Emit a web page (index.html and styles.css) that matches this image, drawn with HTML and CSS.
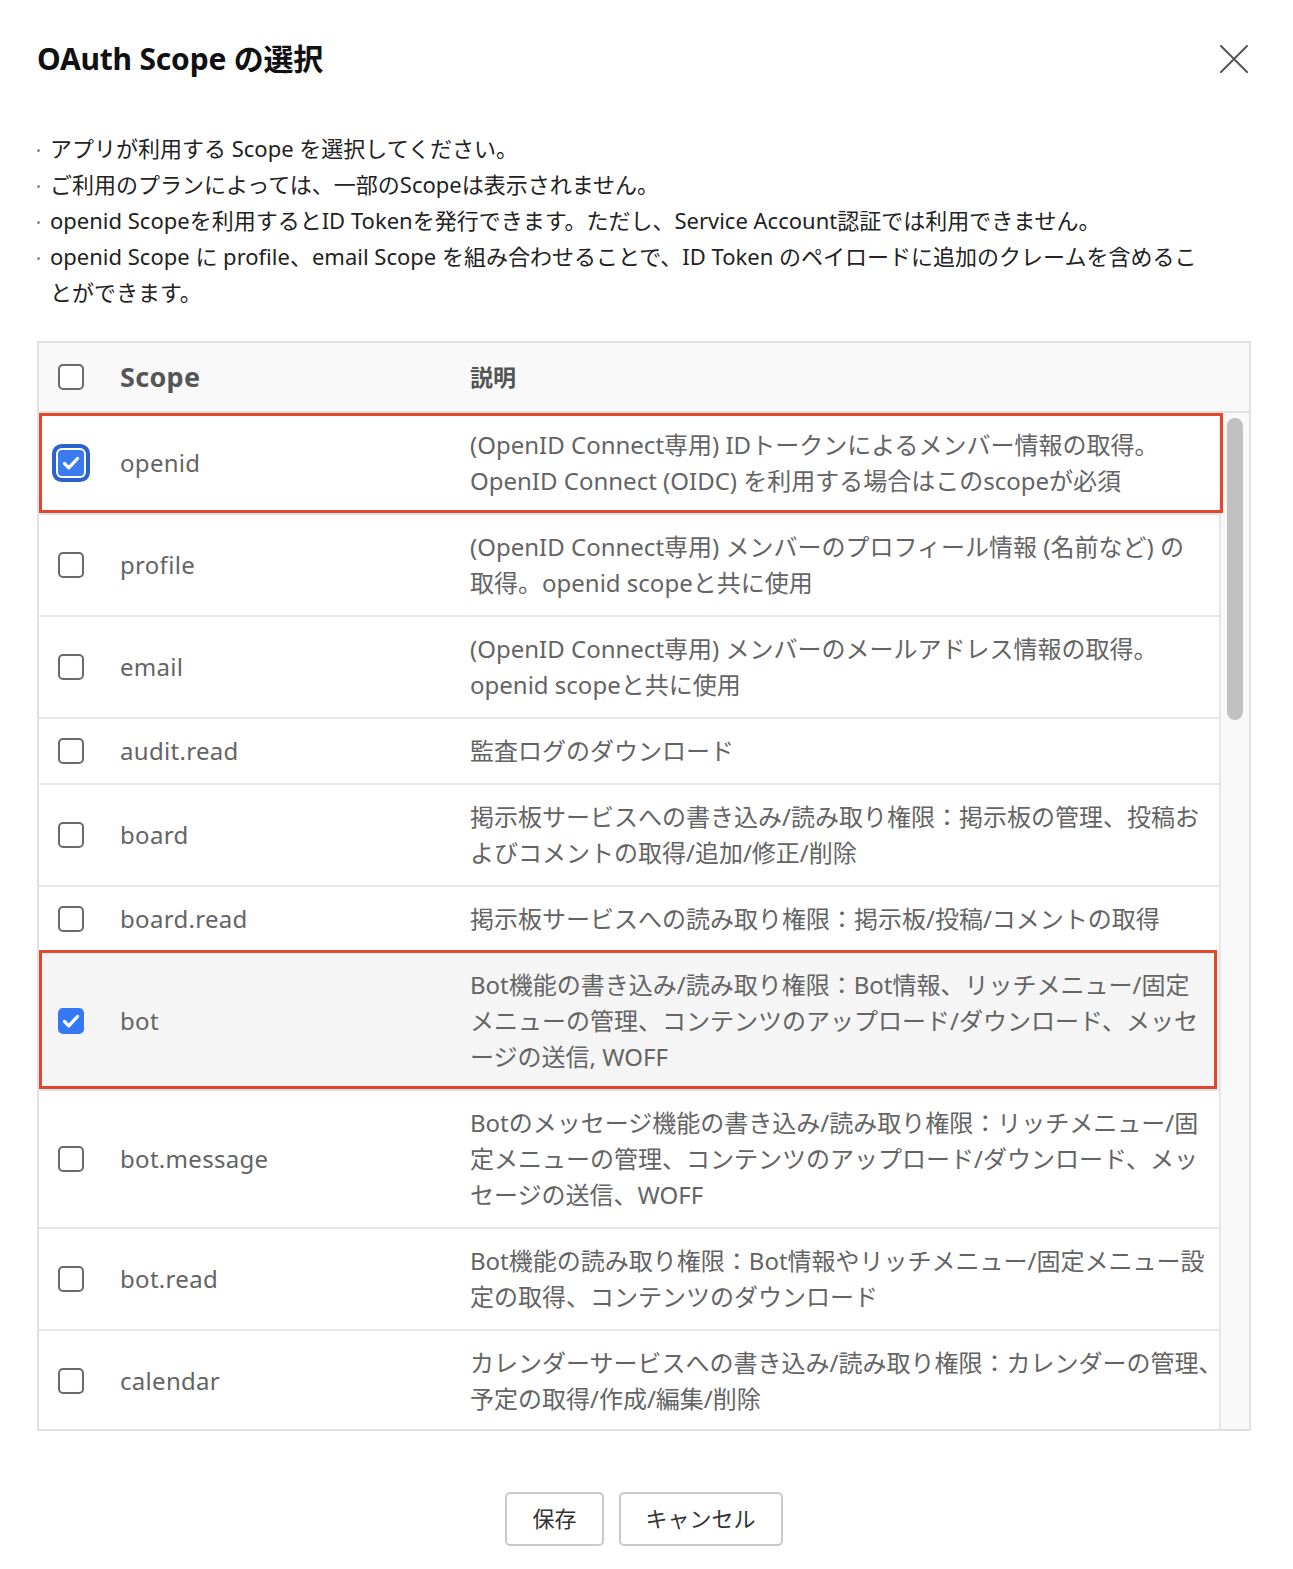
FILE: index.html
```html
<!DOCTYPE html>
<html lang="ja">
<head>
<meta charset="utf-8">
<title>OAuth Scope の選択</title>
<link rel="stylesheet" href="styles.css">
</head>
<body>
<div class="modal">
  <header class="modal-head">
    <h1 class="modal-title">OAuth Scope の選択</h1>
    <button class="close" type="button" aria-label="閉じる">
      <svg width="28" height="28" viewBox="0 0 28 28"><path d="M1 1 L27 27 M27 1 L1 27" stroke="#555" stroke-width="2" stroke-linecap="round" fill="none"/></svg>
    </button>
  </header>

  <ul class="notes">
    <li><span class="dot"></span><span class="note-text">アプリが利用する Scope を選択してください。</span></li>
    <li><span class="dot"></span><span class="note-text">ご利用のプランによっては、一部のScopeは表示されません。</span></li>
    <li><span class="dot"></span><span class="note-text">openid Scopeを利用するとID Tokenを発行できます。ただし、Service Account認証では利用できません。</span></li>
    <li><span class="dot"></span><span class="note-text">openid Scope に profile、email Scope を組み合わせることで、ID Token のペイロードに追加のクレームを含めるこ<br>とができます。</span></li>
  </ul>

  <div class="table">
    <div class="thead">
      <div class="c-check"><span class="cb"></span></div>
      <div class="c-scope th-scope">Scope</div>
      <div class="th-desc">説明</div>
    </div>
    <div class="tbody">
      <div class="rows">
        <div class="row hl hl-a">
          <div class="c-check"><span class="cb on focus"><svg viewBox="0 0 26 26" width="26" height="26"><path d="M6.5 13.5 L10.8 17.8 L19.5 8.5" stroke="#fff" stroke-width="3.2" fill="none" stroke-linecap="round" stroke-linejoin="round"/></svg></span></div>
          <div class="c-scope">openid</div>
          <div class="c-desc">(OpenID Connect専用) IDトークンによるメンバー情報の取得。<br>OpenID Connect (OIDC) を利用する場合はこのscopeが必須</div>
        </div>
        <div class="row">
          <div class="c-check"><span class="cb"></span></div>
          <div class="c-scope">profile</div>
          <div class="c-desc">(OpenID Connect専用) メンバーのプロフィール情報 (名前など) の<br>取得。openid scopeと共に使用</div>
        </div>
        <div class="row">
          <div class="c-check"><span class="cb"></span></div>
          <div class="c-scope">email</div>
          <div class="c-desc">(OpenID Connect専用) メンバーのメールアドレス情報の取得。<br>openid scopeと共に使用</div>
        </div>
        <div class="row">
          <div class="c-check"><span class="cb"></span></div>
          <div class="c-scope">audit.read</div>
          <div class="c-desc">監査ログのダウンロード</div>
        </div>
        <div class="row">
          <div class="c-check"><span class="cb"></span></div>
          <div class="c-scope">board</div>
          <div class="c-desc">掲示板サービスへの書き込み/読み取り権限：掲示板の管理、投稿お<br>よびコメントの取得/追加/修正/削除</div>
        </div>
        <div class="row">
          <div class="c-check"><span class="cb"></span></div>
          <div class="c-scope">board.read</div>
          <div class="c-desc">掲示板サービスへの読み取り権限：掲示板/投稿/コメントの取得</div>
        </div>
        <div class="row selected hl hl-b">
          <div class="c-check"><span class="cb on"><svg viewBox="0 0 26 26" width="26" height="26"><path d="M6.5 13.5 L10.8 17.8 L19.5 8.5" stroke="#fff" stroke-width="3.2" fill="none" stroke-linecap="round" stroke-linejoin="round"/></svg></span></div>
          <div class="c-scope">bot</div>
          <div class="c-desc">Bot機能の書き込み/読み取り権限：Bot情報、リッチメニュー/固定<br>メニューの管理、コンテンツのアップロード/ダウンロード、メッセ<br>ージの送信, WOFF</div>
        </div>
        <div class="row">
          <div class="c-check"><span class="cb"></span></div>
          <div class="c-scope">bot.message</div>
          <div class="c-desc">Botのメッセージ機能の書き込み/読み取り権限：リッチメニュー/固<br>定メニューの管理、コンテンツのアップロード/ダウンロード、メッ<br>セージの送信、WOFF</div>
        </div>
        <div class="row">
          <div class="c-check"><span class="cb"></span></div>
          <div class="c-scope">bot.read</div>
          <div class="c-desc">Bot機能の読み取り権限：Bot情報やリッチメニュー/固定メニュー設<br>定の取得、コンテンツのダウンロード</div>
        </div>
        <div class="row">
          <div class="c-check"><span class="cb"></span></div>
          <div class="c-scope">calendar</div>
          <div class="c-desc">カレンダーサービスへの書き込み/読み取り権限：カレンダーの管理、<br>予定の取得/作成/編集/削除</div>
        </div>
      </div>
      <div class="track"><div class="thumb"></div></div>
    </div>
  </div>

  <div class="actions">
    <button class="btn" type="button">保存</button>
    <button class="btn" type="button">キャンセル</button>
  </div>
</div>
</body>
</html>
```

FILE: styles.css
```css
* { box-sizing: border-box; }

html, body {
  margin: 0;
  padding: 0;
  background: #fff;
}

body {
  font-family: "Noto Sans", "Noto Sans CJK JP", sans-serif;
  color: #222;
}

.modal {
  width: 1293px;
  padding: 39px 42px 0 37px;
}

.modal-head {
  display: flex;
  align-items: center;
  justify-content: space-between;
  height: 40px;
}

.modal-title {
  margin: 0;
  font-size: 30px;
  line-height: 40px;
  font-weight: 700;
  color: #111;
  letter-spacing: -0.2px;
}

.close {
  border: 0;
  padding: 0;
  margin: 0 3px 0 0;
  background: transparent;
  width: 28px;
  height: 28px;
  display: flex;
}

.notes {
  list-style: none;
  margin: 51px 0 0;
  padding: 0;
  font-size: 22px;
  line-height: 36px;
  color: #222;
}

.notes li {
  display: flex;
  align-items: flex-start;
}

.dot {
  flex: 0 0 13px;
  height: 36px;
  display: flex;
  align-items: center;
}

.dot::before {
  content: "";
  width: 3px;
  height: 3px;
  border-radius: 50%;
  background: #888;
  margin-top: 4px;
}

.note-text {
  white-space: nowrap;
}

.table {
  margin-top: 31px;
  width: 1214px;
  border: 2px solid #e1e1e1;
}

.thead,
.row {
  display: grid;
  grid-template-columns: 62px 350px 1fr;
  padding-left: 19px;
}

.thead {
  height: 70px;
  align-items: center;
  background: #f9f9f9;
  border-bottom: 2px solid #e1e1e1;
  color: #555;
  font-weight: 700;
}

.th-scope {
  font-size: 27px;
  line-height: 36px;
}

.th-desc {
  font-size: 23px;
  line-height: 36px;
}

.tbody {
  display: flex;
  height: 1016px;
  overflow: hidden;
}

.rows {
  width: 1182px;
  border-right: 2px solid #e6e6e6;
}

.row {
  position: relative;
  align-items: center;
  padding-top: 14px;
  padding-bottom: 14px;
  border-bottom: 2px solid #e6e6e6;
  font-size: 24px;
  line-height: 36px;
  color: #646464;
  background: #fff;
}

.row.selected {
  background: #f5f5f5;
}

.c-scope {
  letter-spacing: 0.3px;
}

.c-check {
  display: flex;
  align-items: center;
}

.c-desc {
  white-space: nowrap;
  align-self: start;
}

.hl::after {
  content: "";
  position: absolute;
  top: 0;
  bottom: 0;
  left: 0;
  right: -4px;
  border: 3px solid #e4462e;
  pointer-events: none;
}

.hl-b::after {
  top: -3px;
  right: 2px;
}

.cb {
  width: 26px;
  height: 26px;
  border: 2px solid #6a6a6a;
  border-radius: 5px;
  background: #fff;
  display: inline-flex;
  align-items: center;
  justify-content: center;
}

.cb.on {
  background: #3478f6;
  border-color: #3478f6;
}

.cb.on svg {
  flex: none;
  margin: -2px;
}

.cb.focus {
  background: #3a7bf0;
  border-color: #3a7bf0;
  border-radius: 4px;
  box-shadow: 0 0 0 2px #fff, 0 0 0 6px #2b62cf;
}

.track {
  flex: 1;
  background: #f9f9f9;
  padding: 5px 6px;
}

.thumb {
  width: 16px;
  height: 302px;
  border-radius: 8px;
  background: #c1c1c1;
}

.actions {
  display: flex;
  justify-content: center;
  gap: 15px;
  margin-top: 61px;
}

.btn {
  height: 54px;
  padding: 0 25px 4px;
  border: 2px solid #c9c9c9;
  border-radius: 5px;
  background: #fff;
  font-family: "Noto Sans CJK JP", sans-serif;
  font-size: 22px;
  line-height: 30px;
  color: #333;
}
```
